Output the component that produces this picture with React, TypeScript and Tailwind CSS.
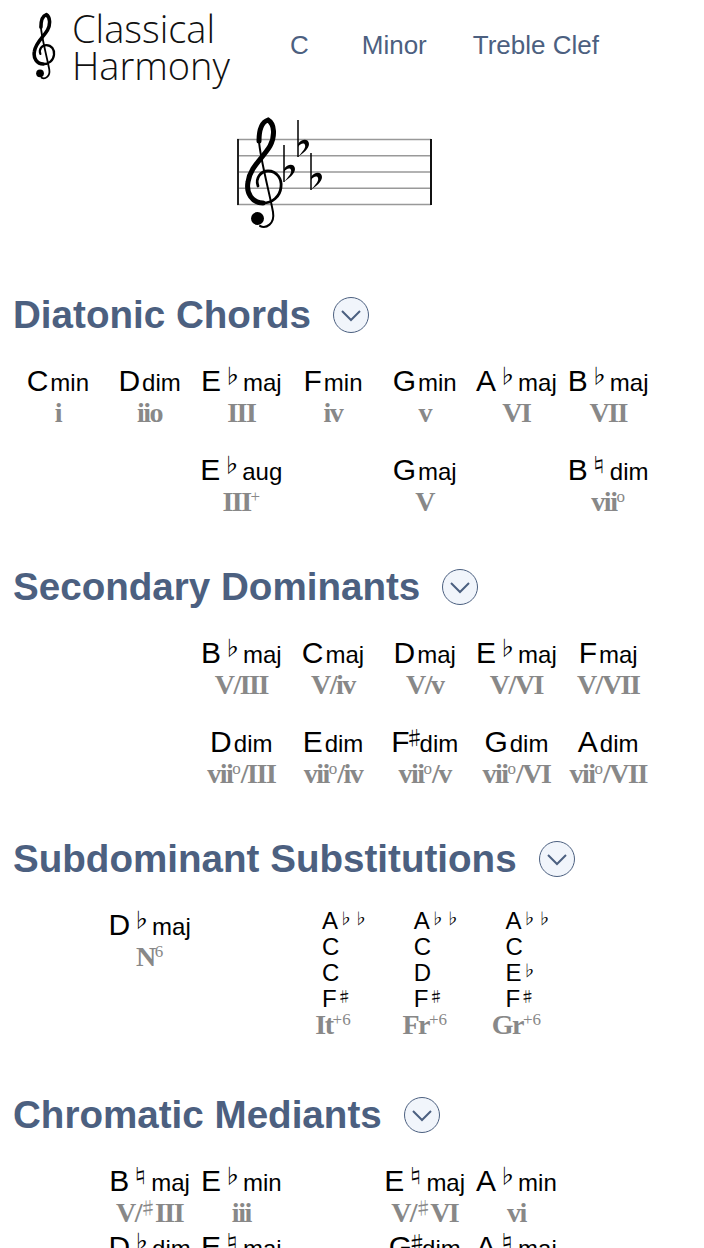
import type { ReactNode } from "react";

type Chord = {
  root: string;
  acc?: string;
  quality: string;
  numeral: ReactNode;
};
type Cell = Chord | null;

const FLAT = "♭";
const NATURAL = "♮";
const SHARP = "♯";

function Up({ children }: { children: ReactNode }) {
  return <sup className="top-[-9px] text-[17px] font-normal tracking-normal">{children}</sup>;
}

const diatonic: Cell[] = [
  { root: "C", quality: "min", numeral: "i" },
  { root: "D", quality: "dim", numeral: "iio" },
  { root: "E", acc: FLAT, quality: "maj", numeral: "III" },
  { root: "F", quality: "min", numeral: "iv" },
  { root: "G", quality: "min", numeral: "v" },
  { root: "A", acc: FLAT, quality: "maj", numeral: "VI" },
  { root: "B", acc: FLAT, quality: "maj", numeral: "VII" },
  null,
  null,
  { root: "E", acc: FLAT, quality: "aug", numeral: <>III<Up>+</Up></> },
  null,
  { root: "G", quality: "maj", numeral: "V" },
  null,
  { root: "B", acc: NATURAL, quality: "dim", numeral: <>vii<Up>o</Up></> },
];

const secondary: Cell[] = [
  null,
  null,
  { root: "B", acc: FLAT, quality: "maj", numeral: "V/III" },
  { root: "C", quality: "maj", numeral: "V/iv" },
  { root: "D", quality: "maj", numeral: "V/v" },
  { root: "E", acc: FLAT, quality: "maj", numeral: "V/VI" },
  { root: "F", quality: "maj", numeral: "V/VII" },
  null,
  null,
  { root: "D", quality: "dim", numeral: <>vii<Up>o</Up>/III</> },
  { root: "E", quality: "dim", numeral: <>vii<Up>o</Up>/iv</> },
  { root: "F", acc: SHARP, quality: "dim", numeral: <>vii<Up>o</Up>/v</> },
  { root: "G", quality: "dim", numeral: <>vii<Up>o</Up>/VI</> },
  { root: "A", quality: "dim", numeral: <>vii<Up>o</Up>/VII</> },
];

const sharpMark = (
  <sup className="top-[-7px] mx-[-2px] text-[18px] font-normal tracking-normal" style={{ fontFamily: '"Noto Sans CJK JP", sans-serif' }}>
    ♯
  </sup>
);

const mediants: Cell[] = [
  null,
  { root: "B", acc: NATURAL, quality: "maj", numeral: <>V/{sharpMark}III</> },
  { root: "E", acc: FLAT, quality: "min", numeral: "iii" },
  null,
  { root: "E", acc: NATURAL, quality: "maj", numeral: <>V/{sharpMark}VI</> },
  { root: "A", acc: FLAT, quality: "min", numeral: "vi" },
  null,
  null,
  { root: "D", acc: FLAT, quality: "dim", numeral: "" },
  { root: "E", acc: NATURAL, quality: "maj", numeral: "" },
  null,
  { root: "G", acc: SHARP, quality: "dim", numeral: "" },
  { root: "A", acc: NATURAL, quality: "maj", numeral: "" },
  null,
];

const augmented = [
  { notes: [["A", "♭♭"], ["C"], ["C"], ["F", SHARP]], numeral: "It" },
  { notes: [["A", "♭♭"], ["C"], ["D"], ["F", SHARP]], numeral: "Fr" },
  { notes: [["A", "♭♭"], ["C"], ["E", FLAT], ["F", SHARP]], numeral: "Gr" },
];

function TrebleClef({ className, heavy }: { className?: string; heavy?: boolean }) {
  const extra = heavy ? 1 : 0;
  return (
    <svg viewBox="244 116 42 115" className={className} fill="none" stroke="currentColor" strokeLinecap="round">
      <path d="M258 186C255 178 261 171 268 171C277 171 282 179 281 187C280 197 272 203 263 203" strokeWidth={2.8 + extra} />
      <path d="M263 203C252 203 246 193 248 182C250 167 263 158 270 146C275 137 275 124 268 120C262 122 259 130 259 141" strokeWidth={5 + extra} />
      <path d="M259 141C260 158 270 195 273 212C275 224 266 229 260 226" strokeWidth={2 + extra} />
      <circle cx="257.5" cy="218.5" r="6.5" fill="currentColor" stroke="none" />
    </svg>
  );
}

function Staff() {
  const lines = [139.5, 155.75, 172, 188.25, 204.5];
  const flats = [284, 298, 311];
  const tops = [145, 120, 153];
  return (
    <div className="relative ml-[230px] mt-[18px] h-[115px] w-[210px]">
      <svg viewBox="230 118 210 115" className="h-[115px] w-[210px]" fill="none">
        {lines.map((y) => (
          <line key={y} x1="237" x2="431" y1={y} y2={y} stroke="#999" strokeWidth="1.3" />
        ))}
        <line x1="238" x2="238" y1="139" y2="205" stroke="#222" strokeWidth="2" />
        <line x1="431" x2="431" y1="139" y2="205" stroke="#111" strokeWidth="2" />
        {flats.map((x, i) => (
          <g key={x}>
            <line x1={x} x2={x} y1={tops[i]} y2={tops[i] + 37} stroke="#000" strokeWidth="1.5" />
            <path
              d={`M${x} ${tops[i] + 24}C${x + 4} ${tops[i] + 18} ${x + 11} ${tops[i] + 19} ${x + 11} ${tops[i] + 24}C${x + 11} ${tops[i] + 29} ${x + 5} ${tops[i] + 33} ${x} ${tops[i] + 37}C${x + 5} ${tops[i] + 31} ${x + 8} ${tops[i] + 28} ${x + 7} ${tops[i] + 25}C${x + 6} ${tops[i] + 22} ${x + 2} ${tops[i] + 24} ${x} ${tops[i] + 27}Z`}
              fill="#000"
            />
          </g>
        ))}
      </svg>
      <TrebleClef className="absolute left-[14px] top-[-2px] h-[115px] w-[42px] text-black" />
    </div>
  );
}

function Heading({ title }: { title: string }) {
  return (
    <div className="ml-[13px] flex h-[44px] items-center gap-[22px]">
      <h2 className="text-[38.6px] font-bold leading-[44px] text-[#4c6080]">{title}</h2>
      <button className="flex h-[36px] w-[36px] items-center justify-center rounded-full border-[1.5px] border-[#4c6080] bg-[#f1f5fb] text-[#4c6080]">
        <svg viewBox="0 0 24 24" className="h-[24px] w-[24px]" fill="none" stroke="currentColor" strokeWidth="2">
          <path d="M3 8l9 9 9-9" />
        </svg>
      </button>
    </div>
  );
}

const cjk = { fontFamily: '"Noto Sans CJK JP", "DejaVu Sans", sans-serif' };
const serif = { fontFamily: '"Liberation Serif", serif' };

function ChordAccidental({ acc }: { acc: string }) {
  return (
    <span
      className={
        acc === SHARP
          ? "relative top-[-6px] mx-[-5px] text-[20px] leading-none"
          : "relative top-[-7px] mx-[1px] text-[20px] leading-none"
      }
      style={cjk}
    >
      {acc}
    </span>
  );
}

function ChordCell({ chord }: { chord: Cell }) {
  if (!chord) return <div />;
  return (
    <div className="flex flex-col items-center">
      <div className="flex h-[34px] items-baseline whitespace-nowrap leading-[34px] text-black">
        <span className="text-[30px]">{chord.root}</span>
        {chord.acc ? <ChordAccidental acc={chord.acc} /> : <span className="w-[2px]" />}
        <span className="text-[24px]">{chord.quality}</span>
      </div>
      <div className="h-[30px] whitespace-nowrap text-[28px] font-bold leading-[30px] tracking-[-1.5px] text-[#888]" style={serif}>
        {chord.numeral}
      </div>
    </div>
  );
}

function ChordGrid({ cells, rowClass }: { cells: Cell[]; rowClass: string }) {
  return (
    <div className={`mt-[27px] ml-[12px] grid w-[642px] grid-cols-7 ${rowClass}`}>
      {cells.map((c, i) => (
        <ChordCell key={i} chord={c} />
      ))}
    </div>
  );
}

export default function App() {
  return (
    <div className="h-[1248px] overflow-hidden bg-white" style={{ fontFamily: '"Liberation Sans", Arial, sans-serif' }}>
      <header className="flex h-[100px] items-start pl-[32px] pt-[12px]">
        <TrebleClef heavy className="h-[69px] w-[25px] text-black" />
        <div className="ml-[15px] mt-[-2px] text-[38px] font-light leading-[37px] text-[#111]" style={{ fontFamily: '"Open Sans", sans-serif' }}>
          <div>Classical</div>
          <div>Harmony</div>
        </div>
        <nav className="mt-[17px] flex text-[26px] leading-[32px] text-[#4c6080]">
          <span className="ml-[60px]">C</span>
          <span className="ml-[53px]">Minor</span>
          <span className="ml-[46px]">Treble Clef</span>
        </nav>
      </header>

      <Staff />

      <section className="mt-[60px]">
        <Heading title="Diatonic Chords" />
        <ChordGrid cells={diatonic} rowClass="auto-rows-[88.5px]" />
      </section>

      <section className="mt-[24px]">
        <Heading title="Secondary Dominants" />
        <ChordGrid cells={secondary} rowClass="auto-rows-[88.5px]" />
      </section>

      <section className="mt-[24px]">
        <Heading title="Subdominant Substitutions" />
        <div className="mt-[27px] ml-[12px] grid h-[161px] w-[642px] grid-cols-7">
          <div />
          <ChordCell chord={{ root: "D", acc: FLAT, quality: "maj", numeral: <>N<Up>6</Up></> }} />
          <div />
          {augmented.map((a) => (
            <div key={a.numeral} className="flex flex-col items-center">
              <div className="w-[22px] text-[24px] leading-[26px] text-black">
                {a.notes.map((n, i) => (
                  <div key={i} className="whitespace-pre">
                    {n[0]}
                    {n[1] && (
                      <span className="relative top-[-5px] text-[15px] leading-none" style={cjk}>
                        {n[1]}
                      </span>
                    )}
                  </div>
                ))}
              </div>
              <div className="whitespace-nowrap text-[28px] font-bold leading-[26px] tracking-[-1.5px] text-[#888]" style={serif}>
                {a.numeral}
                <Up>+6</Up>
              </div>
            </div>
          ))}
        </div>
      </section>

      <section className="mt-[24px]">
        <Heading title="Chromatic Mediants" />
        <ChordGrid cells={mediants} rowClass="auto-rows-[66px]" />
      </section>
    </div>
  );
}
